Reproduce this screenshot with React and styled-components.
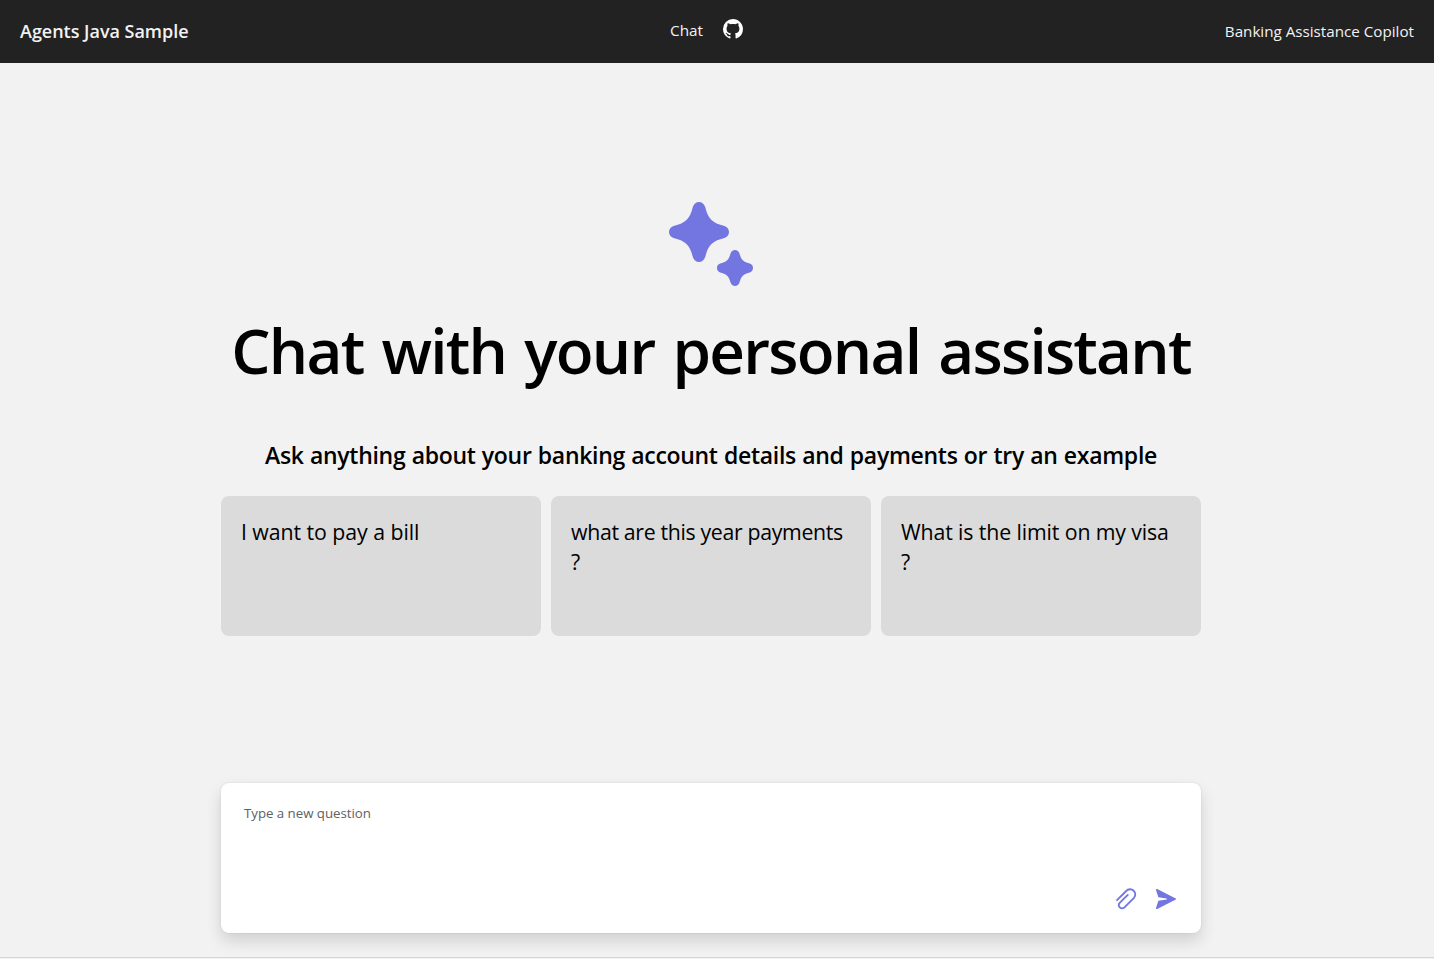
import React from "react";
import styled, { createGlobalStyle } from "styled-components";
import { VscGithubInverted } from "react-icons/vsc";

const GlobalStyle = createGlobalStyle`
  * { box-sizing: border-box; }
  body {
    margin: 0;
    background: #f2f2f2;
    font-family: "Open Sans", "Noto Sans", sans-serif;
    color: #000;
  }
`;

const Page = styled.div`
  height: 959px;
  display: flex;
  flex-direction: column;
  overflow: hidden;
`;

const Header = styled.header`
  height: 63px;
  flex: none;
  background: #222;
  color: #f2f2f2;
  display: grid;
  grid-template-columns: 1fr auto 1fr;
  align-items: center;
  padding: 0 20px 2px;
`;

const Title = styled.h3`
  margin: 0;
  font-size: 18px;
  font-weight: 600;
  letter-spacing: -0.02px;
  white-space: nowrap;
`;

const Nav = styled.nav`
  display: flex;
  align-items: flex-start;
  gap: 20px;
  margin-right: 21px;
  padding-bottom: 1px;
`;

const NavLink = styled.a`
  font-size: 15.3px;
  line-height: 22px;
`;

const Tagline = styled.span`
  justify-self: end;
  font-size: 15.2px;
  white-space: nowrap;
`;

const Main = styled.main`
  flex: 1;
  width: 980px;
  margin-left: 221px;
  display: flex;
  flex-direction: column;
  align-items: center;
`;

const Sparkles = styled.svg`
  flex: none;
  margin-top: 139px;
  width: 84px;
  height: 84px;
  fill: #7376e1;
`;

const Heading = styled.h1`
  margin: 22px 0 0;
  font-size: 62px;
  line-height: 85px;
  font-weight: 600;
  letter-spacing: -1.75px;
  word-spacing: 3.7px;
  white-space: nowrap;
`;

const Subheading = styled.h2`
  margin: 46px 0 0;
  font-size: 23px;
  line-height: 32px;
  font-weight: 600;
  letter-spacing: -0.3px;
  word-spacing: 0.62px;
  white-space: nowrap;
`;

const Examples = styled.ul`
  list-style: none;
  margin: 25px 0 0;
  padding: 0;
  align-self: stretch;
  display: grid;
  grid-template-columns: repeat(3, 1fr);
  gap: 10px;
`;

const Example = styled.li`
  height: 140px;
  padding: 21px 20px;
  border-radius: 8px;
  background: #dbdbdb;
  font-size: 21.3px;
  line-height: 30px;
  letter-spacing: ${(p) => p.$tracking}px;
`;

const QuestionBox = styled.section`
  align-self: stretch;
  flex: none;
  height: 150px;
  margin-top: 147px;
  padding: 20px 24px 23px 23px;
  border-radius: 8px;
  background: #fff;
  box-shadow: 0 8px 16px rgba(0, 0, 0, 0.14), 0 0 2px rgba(0, 0, 0, 0.12);
  display: flex;
  flex-direction: column;
  justify-content: space-between;
`;

const Placeholder = styled.span`
  font-size: 13.3px;
  line-height: 20px;
  letter-spacing: -0.04px;
  color: #616161;
`;

const Actions = styled.div`
  display: flex;
  justify-content: flex-end;
  gap: 18px;
`;

const ActionIcon = styled.svg`
  width: 22px;
  height: 22px;
  color: #7376e1;
`;

const Footer = styled.div`
  flex: none;
  height: 2px;
  border-top: 1px solid #d6d6d6;
`;

const LARGE_STAR =
  "M30 0C32.8 0 35 1.8 36 4.5L37.5 9.5C39.5 16 44 20.5 50.5 22.5L55.5 24C58.2 25 60 27.2 60 30C60 32.8 58.2 35 55.5 36L50.5 37.5C44 39.5 39.5 44 37.5 50.5L36 55.5C35 58.2 32.8 60 30 60C27.2 60 25 58.2 24 55.5L22.5 50.5C20.5 44 16 39.5 9.5 37.5L4.5 36C1.8 35 0 32.8 0 30C0 27.2 1.8 25 4.5 24L9.5 22.5C16 20.5 20.5 16 22.5 9.5L24 4.5C25 1.8 27.2 0 30 0Z";

const SMALL_STAR =
  "M18 0C20.2 0 21.8 1.3 22.4 3.2L23.2 5.8C24.2 9.2 26.8 11.8 30.2 12.8L32.8 13.6C34.7 14.2 36 15.8 36 18C36 20.2 34.7 21.8 32.8 22.4L30.2 23.2C26.8 24.2 24.2 26.8 23.2 30.2L22.4 32.8C21.8 34.7 20.2 36 18 36C15.8 36 14.2 34.7 13.6 32.8L12.8 30.2C11.8 26.8 9.2 24.2 5.8 23.2L3.2 22.4C1.3 21.8 0 20.2 0 18C0 15.8 1.3 14.2 3.2 13.6L5.8 12.8C9.2 11.8 11.8 9.2 12.8 5.8L13.6 3.2C14.2 1.3 15.8 0 18 0Z";

const examples = [
  { text: "I want to pay a bill", tracking: -0.06 },
  { text: "what are this year payments ?", tracking: -0.34 },
  { text: "What is the limit on my visa ?", tracking: -0.12 },
];

export default function App() {
  return (
    <Page>
      <GlobalStyle />
      <Header>
        <Title>Agents Java Sample</Title>
        <Nav>
          <NavLink>Chat</NavLink>
          <VscGithubInverted size={20} color="#fff" />
        </Nav>
        <Tagline>Banking Assistance Copilot</Tagline>
      </Header>
      <Main>
        <Sparkles viewBox="0 0 84 84">
          <path d={LARGE_STAR} />
          <path d={SMALL_STAR} transform="translate(48 48)" />
        </Sparkles>
        <Heading>Chat with your personal assistant</Heading>
        <Subheading>
          Ask anything about your banking account details and payments or try an example
        </Subheading>
        <Examples>
          {examples.map(({ text, tracking }) => (
            <Example key={text} $tracking={tracking}>
              {text}
            </Example>
          ))}
        </Examples>
        <QuestionBox>
          <Placeholder>Type a new question</Placeholder>
          <Actions>
            <ActionIcon viewBox="0 0 22 22" fill="none" stroke="currentColor" strokeWidth="1.85" strokeLinecap="round">
              <path d="M2 12.2 11.2 3A4.9 4.9 0 0 1 19 9.8L9.4 19.4A3.2 3.2 0 0 1 4.7 14.8L12.8 6.9" />
            </ActionIcon>
            <ActionIcon viewBox="0 0 22 22" fill="currentColor">
              <path d="M2.2 1.1 20.8 10.4Q21.8 11 20.8 11.6L2.2 20.9C1.4 21.2.8 20.6 1 19.9L3.4 12.7 11.6 11.4Q12.6 11 11.6 10.6L3.4 9.3 1 2.1C.8 1.4 1.4.8 2.2 1.1Z" />
            </ActionIcon>
          </Actions>
        </QuestionBox>
      </Main>
      <Footer />
    </Page>
  );
}
